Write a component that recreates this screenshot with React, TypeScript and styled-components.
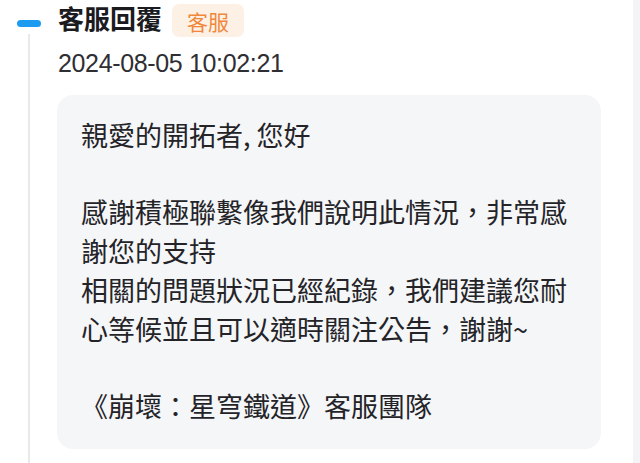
import React from "react";
import styled, { createGlobalStyle } from "styled-components";

const GlobalStyle = createGlobalStyle`
  html, body, #root {
    height: 100%;
  }
  body {
    margin: 0;
    background: #ffffff;
    font-family: "Liberation Sans", "Noto Sans CJK TC", sans-serif;
    color: #222222;
  }
`;

const Page = styled.div`
  display: flex;
  height: 100%;
  overflow: hidden;
`;

const Main = styled.div`
  flex: 1;
  display: grid;
  grid-template-columns: 57px 1fr;
  padding-right: 32px;
`;

const ScrollTrack = styled.div`
  width: 7px;
  background: #f4f4f7;
`;

const Rail = styled.div`
  display: flex;
  flex-direction: column;
  align-items: center;
  padding-left: 1px;
`;

const Dot = styled.div`
  width: 24px;
  height: 7px;
  margin-top: 20px;
  border-radius: 4px;
  background: #1d9bf0;
`;

const RailLine = styled.div`
  flex: 1;
  width: 1.5px;
  margin-top: 7px;
  background: #e9e9ec;
`;

const Entry = styled.div`
  display: flex;
  flex-direction: column;
  padding-top: 4px;
`;

const Header = styled.div`
  display: flex;
  align-items: center;
  gap: 10px;
  padding-left: 1px;
`;

const Title = styled.span`
  font-size: 26px;
  font-weight: 700;
  line-height: 33px;
  color: #1b1b1f;
`;

const Tag = styled.span`
  display: inline-flex;
  align-items: center;
  height: 33px;
  padding: 0 15px;
  border-radius: 7px;
  background: #fdf1e6;
  color: #f0873a;
  font-size: 21px;
`;

const Time = styled.div`
  margin-top: 11px;
  padding-left: 1px;
  font-size: 25px;
  letter-spacing: -0.35px;
  line-height: 30px;
  color: #2e2e33;
`;

const Card = styled.div`
  margin-top: 17px;
  padding: 21px 22px 23px 24px;
  border-radius: 16px;
  background: #f5f6f8;
`;

const Line = styled.p`
  margin: 0;
  min-height: 38.7px;
  font-size: 27px;
  line-height: 38.7px;
  color: #242428;
  font-family: "Noto Sans CJK TC", "Liberation Sans", sans-serif;
`;

const message = [
  "親愛的開拓者, 您好",
  "",
  "感謝積極聯繫像我們說明此情況，非常感謝您的支持",
  "相關的問題狀況已經紀錄，我們建議您耐心等候並且可以適時關注公告，謝謝~",
  "",
  "《崩壞：星穹鐵道》客服團隊",
];

export default function App() {
  return (
    <Page>
      <GlobalStyle />
      <Main>
        <Rail>
          <Dot />
          <RailLine />
        </Rail>
        <Entry>
          <Header>
            <Title>客服回覆</Title>
            <Tag>客服</Tag>
          </Header>
          <Time>2024-08-05 10:02:21</Time>
          <Card>
            {message.map((text, i) => (
              <Line key={i}>{text}</Line>
            ))}
          </Card>
        </Entry>
      </Main>
      <ScrollTrack />
    </Page>
  );
}
